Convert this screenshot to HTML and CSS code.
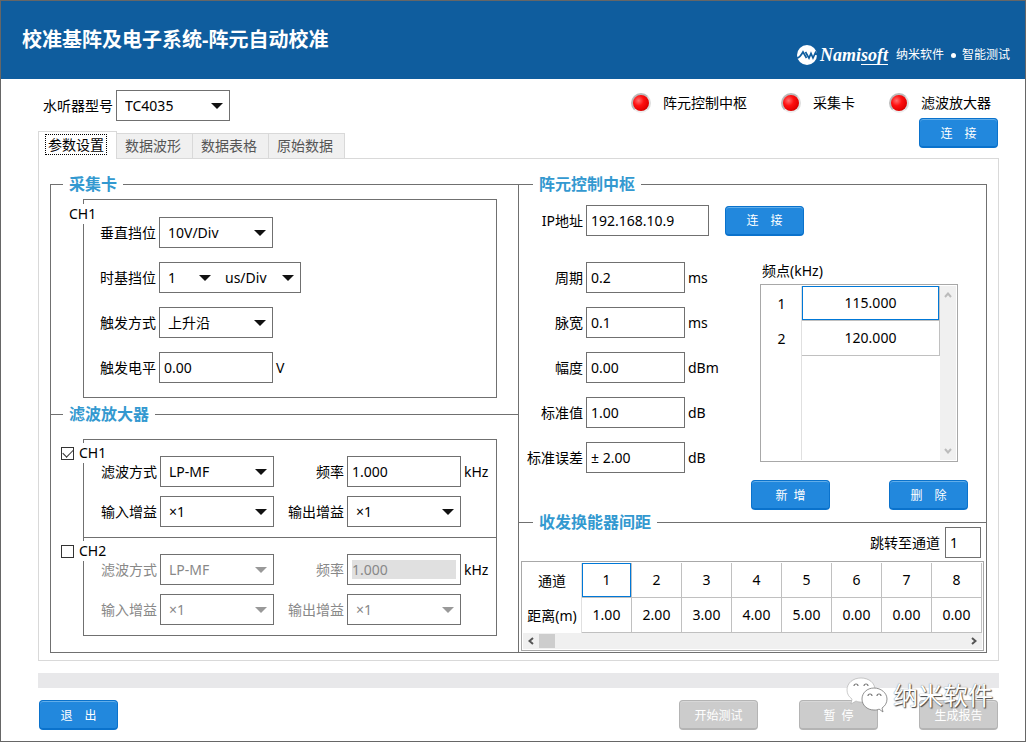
FILE: index.html
```html
<!DOCTYPE html>
<html lang="zh-CN">
<head>
    <meta charset="UTF-8">
    <meta name="viewport" content="width=device-width, initial-scale=1.0">
    <title>校准基阵及电子系统-阵元自动校准</title>
    <link rel="stylesheet" href="styles.css">
</head>
<body>
    <header class="header">
        <h1>校准基阵及电子系统-阵元自动校准</h1>
        <div class="brand">
            <svg class="brand-icon" width="20" height="20" viewBox="0 0 20 20">
                <circle cx="10" cy="10" r="10" fill="#fff"/>
                <path d="M0 13 C2.5 13 4 10.5 6 7 L9.5 13 M8.5 7 L12 13.2 L14 8.5 L16 13 L18.5 7.5 L20 10" fill="none" stroke="#0f5d9e" stroke-width="1.7"/>
            </svg>
            <span class="brand-name">Nami<span class="brand-line">soft</span></span>
            <span class="brand-text">纳米软件</span>
            <span class="brand-dot"></span>
            <span class="brand-text">智能测试</span>
        </div>
    </header>

    <main class="main">
        <div class="top">
            <div class="top-left">
                <div class="model">
                    <label for="model">水听器型号</label>
                    <span class="select"><select id="model"><option>TC4035</option></select></span>
                </div>
                <div class="tabs" role="tablist">
                    <button type="button" class="tab active" role="tab" aria-selected="true"><span>参数设置</span></button>
                    <button type="button" class="tab" role="tab">数据波形</button>
                    <button type="button" class="tab" role="tab">数据表格</button>
                    <button type="button" class="tab" role="tab">原始数据</button>
                </div>
            </div>
            <div class="top-right">
                <div class="status">
                    <span class="status-item"><i class="led"></i>阵元控制中枢</span>
                    <span class="status-item"><i class="led"></i>采集卡</span>
                    <span class="status-item"><i class="led"></i>滤波放大器</span>
                </div>
                <button type="button" class="btn">连&emsp;接</button>
            </div>
        </div>

        <div class="panel">
            <div class="column column-left">
                <fieldset class="group">
                    <legend>采集卡</legend>
                    <div class="card-box">
                        <span class="box-title">CH1</span>
                        <div class="row">
                            <label for="vdiv">垂直挡位</label>
                            <span class="select"><select id="vdiv"><option>10V/Div</option></select></span>
                        </div>
                        <div class="row">
                            <label for="tdiv">时基挡位</label>
                            <div class="pair">
                                <span class="select select-num"><select id="tdiv"><option>1</option></select></span>
                                <span class="select select-unit"><select aria-label="时基单位"><option>us/Div</option></select></span>
                            </div>
                        </div>
                        <div class="row">
                            <label for="trigger">触发方式</label>
                            <span class="select"><select id="trigger"><option>上升沿</option></select></span>
                        </div>
                        <div class="row">
                            <label for="level">触发电平</label>
                            <input type="text" id="level" class="field" value="0.00">
                            <span>V</span>
                        </div>
                    </div>
                </fieldset>

                <fieldset class="group group-last">
                    <legend>滤波放大器</legend>
                    <div class="filter-box">
                        <div class="channel">
                            <label class="channel-title"><input type="checkbox" checked>CH1</label>
                            <label for="mode1">滤波方式</label>
                            <span class="select"><select id="mode1"><option>LP-MF</option></select></span>
                            <label for="freq1">频率</label>
                            <input type="text" id="freq1" class="field" value="1.000">
                            <span>kHz</span>
                            <label for="in1">输入增益</label>
                            <span class="select"><select id="in1"><option>×1</option></select></span>
                            <label for="out1">输出增益</label>
                            <span class="select"><select id="out1"><option>×1</option></select></span>
                        </div>
                        <div class="channel off">
                            <label class="channel-title"><input type="checkbox">CH2</label>
                            <label for="mode2">滤波方式</label>
                            <span class="select"><select id="mode2" disabled><option>LP-MF</option></select></span>
                            <label for="freq2">频率</label>
                            <input type="text" id="freq2" class="field" value="1.000" disabled>
                            <span>kHz</span>
                            <label for="in2">输入增益</label>
                            <span class="select"><select id="in2" disabled><option>×1</option></select></span>
                            <label for="out2">输出增益</label>
                            <span class="select"><select id="out2" disabled><option>×1</option></select></span>
                        </div>
                    </div>
                </fieldset>
            </div>

            <div class="column column-right">
                <fieldset class="group">
                    <legend>阵元控制中枢</legend>
                    <div class="hub">
                        <div class="row ip-row">
                            <label for="ip">IP地址</label>
                            <input type="text" id="ip" class="field" value="192.168.10.9">
                            <button type="button" class="btn">连&emsp;接</button>
                        </div>
                        <div class="hub-body">
                            <div class="fields">
                                <div class="row"><label for="period">周期</label><input type="text" id="period" class="field" value="0.2"><span>ms</span></div>
                                <div class="row"><label for="pulse">脉宽</label><input type="text" id="pulse" class="field" value="0.1"><span>ms</span></div>
                                <div class="row"><label for="amp">幅度</label><input type="text" id="amp" class="field" value="0.00"><span>dBm</span></div>
                                <div class="row"><label for="std">标准值</label><input type="text" id="std" class="field" value="1.00"><span>dB</span></div>
                                <div class="row"><label for="err">标准误差</label><input type="text" id="err" class="field" value="± 2.00"><span>dB</span></div>
                            </div>
                            <div class="freq">
                                <div class="freq-title">频点(kHz)</div>
                                <div class="freq-list">
                                    <div class="freq-table">
                                        <table>
                                            <tr><th>1</th><td class="selected">115.000</td></tr>
                                            <tr><th>2</th><td>120.000</td></tr>
                                            <tr class="rest"><th></th><td></td></tr>
                                        </table>
                                    </div>
                                    <div class="scroll-y">
                                        <svg width="8" height="6" viewBox="0 0 8 6"><path d="M1 5 L4 1.5 L7 5"/></svg>
                                        <svg width="8" height="6" viewBox="0 0 8 6"><path d="M1 1 L4 4.5 L7 1"/></svg>
                                    </div>
                                </div>
                                <div class="freq-buttons">
                                    <button type="button" class="btn">新&nbsp;&nbsp;增</button>
                                    <button type="button" class="btn">删&emsp;除</button>
                                </div>
                            </div>
                        </div>
                    </div>
                </fieldset>

                <fieldset class="group group-last">
                    <legend>收发换能器间距</legend>
                    <div class="jump">
                        <label for="jump">跳转至通道</label>
                        <input type="text" id="jump" class="field" value="1">
                    </div>
                    <div class="distance">
                        <table>
                            <tr><th>通道</th><td class="selected">1</td><td>2</td><td>3</td><td>4</td><td>5</td><td>6</td><td>7</td><td>8</td></tr>
                            <tr><th>距离(m)</th><td>1.00</td><td>2.00</td><td>3.00</td><td>4.00</td><td>5.00</td><td>0.00</td><td>0.00</td><td>0.00</td></tr>
                        </table>
                        <div class="scroll-x">
                            <svg width="6" height="8" viewBox="0 0 6 8"><path d="M5 1 L1.5 4 L5 7"/></svg>
                            <span class="thumb"></span>
                            <svg width="6" height="8" viewBox="0 0 6 8"><path d="M1 1 L4.5 4 L1 7"/></svg>
                        </div>
                    </div>
                </fieldset>
            </div>
        </div>

        <div class="progress"></div>

        <footer class="footer">
            <button type="button" class="btn">退&emsp;出</button>
            <div class="footer-right">
                <button type="button" class="btn" disabled>开始测试</button>
                <button type="button" class="btn" disabled>暂&nbsp;&nbsp;停</button>
                <button type="button" class="btn" disabled>生成报告</button>
            </div>
            <div class="watermark">
                <svg width="42" height="36" viewBox="0 0 42 36">
                    <path d="M15 1 C7 1 1 6 1 13 C1 17 3 20 6 22 L5 27 L10 24 C12 25 14 25 16 25 C23 25 29 20 29 13 C29 6 23 1 15 1 Z" fill="#fff" stroke="#aaa" stroke-width="0.6"/>
                    <path d="M28 11 C21 11 16 16 16 22 C16 28 21 33 28 33 C30 33 32 33 33 32 L37 35 L36 31 C39 29 41 26 41 22 C41 16 35 11 28 11 Z" fill="#fff" stroke="#777" stroke-width="0.8"/>
                    <path d="M8 9 a2 2 0 0 1 4 0 M18 9 a2 2 0 0 1 4 0 M22 19 a2 2 0 0 1 4 0 M31 19 a2 2 0 0 1 4 0" fill="none" stroke="#777" stroke-width="1.2"/>
                </svg>
                <span>纳米软件</span>
            </div>
        </footer>
    </main>
</body>
</html>
```
FILE: styles.css
```css
* {
    box-sizing: border-box;
}
body {
    margin: 0;
    min-height: 100vh;
    border: 1px solid #666;
    background-color: #fff;
    color: #000;
    font-family: "Noto Sans", "Noto Sans CJK SC", sans-serif;
    font-size: 14px;
    line-height: 20px;
}
button, input, select {
    font-family: inherit;
    font-size: 14px;
    color: inherit;
}

/* Header */
.header {
    display: flex;
    justify-content: space-between;
    height: 78px;
    padding: 0 15px 0 21px;
    background-color: #0f5d9e;
    color: #fff;
}
h1 {
    margin: 24px 0 0;
    font-size: 20px;
    line-height: 30px;
    font-weight: bold;
}
.brand {
    display: flex;
    align-items: center;
    height: 30px;
    margin-top: 39px;
}
.brand-name {
    margin-left: 3px;
    font-family: "Liberation Serif", serif;
    font-style: italic;
    font-weight: bold;
    font-size: 18px;
    line-height: 18px;
}
.brand-line {
    display: inline-block;
    border-bottom: 1px solid #fff;
}
.brand-text {
    margin-left: 8px;
    font-size: 12px;
}
.brand-dot {
    width: 5px;
    height: 5px;
    margin: 0 -2px 0 7px;
    border-radius: 50%;
    background-color: #fff;
}
.main {
    padding: 0 26px 0 37px;
}

/* Top area */
.top {
    display: flex;
    justify-content: space-between;
}
.model {
    display: flex;
    align-items: center;
    gap: 3px;
    padding: 11px 0 10px 5px;
}
.tabs {
    position: relative;
    display: flex;
    align-items: flex-end;
    height: 28px;
    margin-bottom: -1px;
}
.tab {
    width: 76px;
    height: 26px;
    padding: 0 3px 3px 0;
    border: 1px solid #d9d9d9;
    border-left: none;
    background-color: #f0f0f0;
    color: #555;
}
.tab.active {
    width: 79px;
    height: 28px;
    border-left: 1px solid #d9d9d9;
    border-bottom: none;
    background-color: #fff;
    color: #000;
}
.tab.active span {
    padding: 0 2px;
    outline: 1px dotted #000;
}
.top-right {
    display: flex;
    flex-direction: column;
    align-items: flex-end;
    gap: 5px;
    padding: 14px 1px 0 0;
}
.status {
    display: flex;
    gap: 34px;
    padding-right: 7px;
}
.status-item {
    display: flex;
    align-items: center;
    gap: 12px;
}
.led {
    width: 20px;
    height: 20px;
    border: 2px solid #ccc;
    border-color: #bbb #ddd #eee #bbb;
    border-radius: 50%;
    background: radial-gradient(circle at 35% 35%, #ff7070 0, #ff1010 35%, #e00000 70%, #700000 100%);
}

/* Controls */
.btn {
    width: 79px;
    height: 30px;
    padding: 0;
    border: 1px solid #0a72cc;
    border-bottom-width: 2px;
    border-radius: 4px;
    background-color: #2288dd;
    box-shadow: inset 0 1px 0 #62aeea;
    color: #fff;
    font-size: 12px;
    cursor: pointer;
}
.btn:disabled {
    border-color: #b4b4b4;
    background-color: #ccc;
    box-shadow: inset 0 1px 0 #d8d8d8;
    cursor: default;
}
.field {
    width: 114px;
    height: 31px;
    padding: 5px 4px;
    border: 1px solid #707070;
    border-radius: 0;
    background-color: #fff;
}
.field:disabled {
    background-color: #e0e0e0;
    background-clip: content-box;
    color: #888;
}
.select {
    position: relative;
    display: block;
    width: 114px;
    height: 31px;
    border: 1px solid #707070;
}
.select select {
    display: block;
    width: 100%;
    height: 100%;
    padding: 0 20px 0 8px;
    border: none;
    background-color: transparent;
    appearance: none;
}
.select select:disabled {
    color: #888;
    opacity: 1;
}
.select::after {
    content: "";
    position: absolute;
    top: 12px;
    right: 6px;
    border: 6px solid transparent;
    border-top-color: #111;
    border-bottom: none;
    pointer-events: none;
}
.off .select::after {
    border-top-color: #999;
}
.pair {
    display: flex;
    border: 1px solid #707070;
}
.pair .select {
    height: 29px;
    border: none;
}
.pair .select-num {
    width: 57px;
}
.pair .select-unit {
    width: 83px;
}

/* Groups */
.panel {
    display: grid;
    grid-template-columns: minmax(0, 468fr) minmax(0, 469fr);
    padding: 15px 11px 7px;
    border: 1px solid #d9d9d9;
}
.group {
    min-width: 0;
    margin: 0;
    padding: 0;
    border: 1px solid #707070;
    border-bottom: none;
}
.column-left .group {
    border-right: none;
}
.group-last {
    margin-top: -10px;
    border-bottom: 1px solid #707070;
}
legend {
    height: 21px;
    margin-left: 12px;
    padding: 0 6px;
    color: #3399d0;
    font-size: 16px;
    line-height: 21px;
    font-weight: bold;
}
.column-right legend {
    margin-left: 14px;
}
.row {
    display: flex;
    align-items: center;
    gap: 3px;
}
.card-box {
    position: relative;
    display: flex;
    flex-direction: column;
    gap: 14px;
    margin: 4px 21px 16px 32px;
    padding: 17px 0 14px;
    border: 1px solid #707070;
}
.card-box label {
    width: 72px;
    text-align: right;
}
.box-title {
    position: absolute;
    top: 4px;
    left: -15px;
    background-color: #fff;
}
.filter-box {
    margin: 14px 21px 16px 32px;
    border: 1px solid #707070;
}
.channel {
    position: relative;
    display: grid;
    grid-template-columns: 73px 114px 67px 114px auto;
    align-items: center;
    gap: 9px 3px;
    padding: 16px 0 10px;
}
.channel + .channel {
    border-top: 1px solid #707070;
}
.channel label {
    text-align: right;
}
.channel.off label {
    color: #888;
}
.channel .channel-title, .channel.off .channel-title {
    position: absolute;
    top: 3px;
    left: -23px;
    display: flex;
    align-items: center;
    gap: 5px;
    background-color: #fff;
    color: #000;
}
input[type="checkbox"] {
    display: grid;
    place-content: center;
    width: 13px;
    height: 13px;
    margin: 0;
    border: 1px solid #333;
    background-color: #fff;
    appearance: none;
}
input[type="checkbox"]:checked::before {
    content: "";
    width: 9px;
    height: 5px;
    margin-bottom: 2px;
    border: solid #333;
    border-width: 0 0 1px 1px;
    transform: rotate(-45deg);
}

/* Control hub */
.hub {
    padding: 10px 18px 12px 0;
}
.hub label {
    width: 64px;
    text-align: right;
}
.ip-row .field {
    width: 123px;
}
.ip-row .btn {
    margin-left: 13px;
}
.hub-body {
    display: flex;
    margin-top: 26px;
}
.fields {
    display: flex;
    flex-direction: column;
    gap: 14px;
    width: 232px;
}
.fields .field {
    width: 99px;
}
.freq {
    flex: 1;
}
.freq-title {
    margin-left: 11px;
    line-height: 18px;
}
.freq-list {
    display: flex;
    height: 178px;
    margin: 4px 10px 18px 9px;
    padding: 1px;
    border: 1px solid #a8a8a8;
}
.freq-table {
    flex: 1;
}
table {
    width: 100%;
    border-collapse: separate;
    border-spacing: 0;
    table-layout: fixed;
}
th, td {
    height: 35px;
    padding: 0;
    border-right: 1px solid #c0c0c0;
    border-bottom: 1px solid #c0c0c0;
    font-weight: normal;
    text-align: center;
}
th {
    border-right-color: #e0e0e0;
    border-bottom: none;
}
.selected {
    box-shadow: inset 0 0 0 1px #0078d7;
}
.freq-table th {
    width: 40px;
}
.freq-table .rest th, .freq-table .rest td {
    height: 104px;
    border-bottom: none;
}
.freq-table .rest td {
    border-right: none;
}
.scroll-y {
    display: flex;
    flex-direction: column;
    justify-content: space-between;
    align-items: center;
    width: 16px;
    padding: 6px 0;
    background-color: #f0f0f0;
}
.scroll-y path, .scroll-x path {
    fill: none;
    stroke: #bbb;
    stroke-width: 2;
}
.freq-buttons {
    display: flex;
    justify-content: space-between;
}

/* Channel distance */
.jump {
    display: flex;
    justify-content: flex-end;
    align-items: center;
    gap: 5px;
    margin: -6px 5px 3px 0;
}
.jump .field {
    width: 36px;
}
.distance {
    margin: 0 2px 1px;
    padding: 1px;
    border: 1px solid #a8a8a8;
}
.distance th {
    width: 59px;
}
.scroll-x {
    display: flex;
    align-items: center;
    height: 16px;
    padding: 0 5px;
    background-color: #f0f0f0;
}
.scroll-x path {
    stroke: #555;
}
.thumb {
    width: 16px;
    height: 14px;
    margin: 0 auto 0 5px;
    background-color: #cdcdcd;
}

/* Bottom area */
.progress {
    height: 15px;
    margin-top: 12px;
    background-color: #e8e8ea;
}
.footer {
    position: relative;
    display: flex;
    justify-content: space-between;
    padding: 12px 1px 11px;
}
.footer-right {
    display: flex;
    gap: 41px;
}
.watermark {
    position: absolute;
    right: 6px;
    bottom: 28px;
    display: flex;
    align-items: center;
    gap: 5px;
    color: #fff;
    font-size: 25px;
    line-height: 36px;
    text-shadow: 1px 1px 1px #444, 0 0 1px #666;
}
```
